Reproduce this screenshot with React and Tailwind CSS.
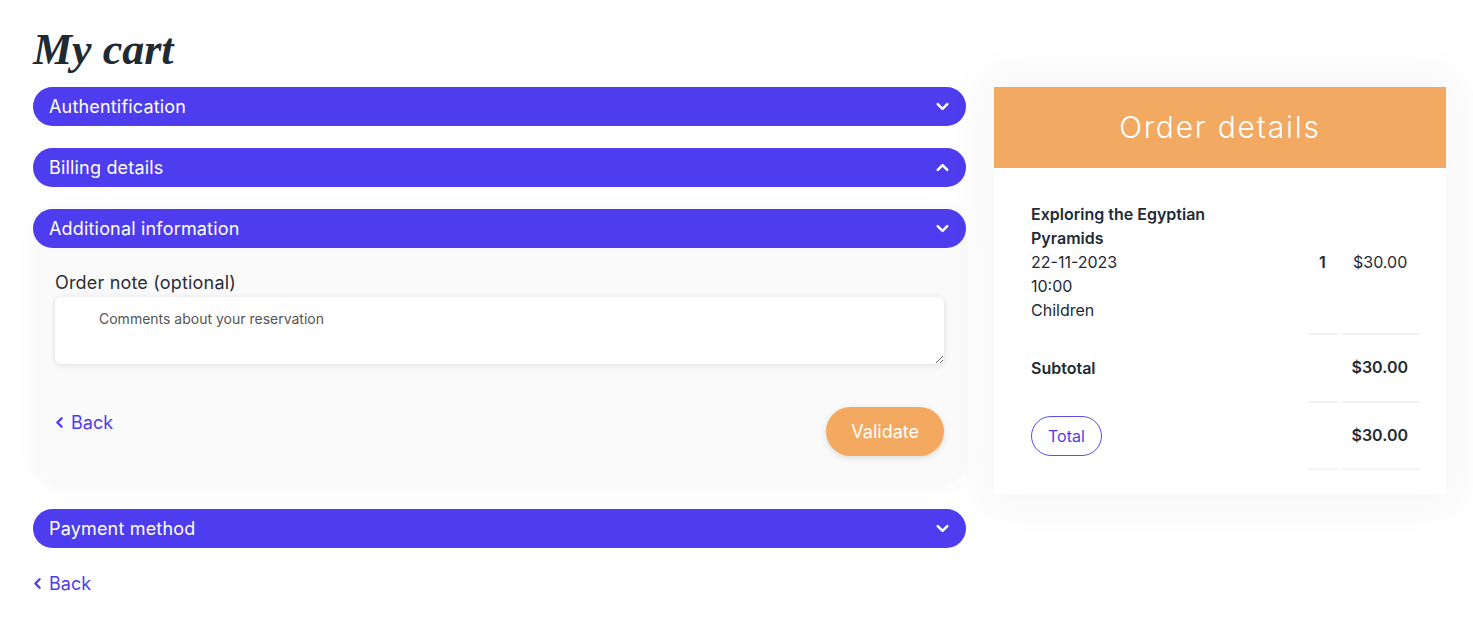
import { ChevronDown, ChevronUp, ChevronLeft } from "lucide-react";

const font = { fontFamily: "Inter, 'Noto Sans', sans-serif" };

function Bar({ title, open }) {
  return (
    <div className="flex h-[39px] items-center justify-between rounded-full bg-[#4d3def] pl-4 pr-[14px] text-white">
      <span className="text-[18px] tracking-[0.01em]">{title}</span>
      {open ? <ChevronUp size={19} strokeWidth={3.2} /> : <ChevronDown size={19} strokeWidth={3.2} />}
    </div>
  );
}

function Back() {
  return (
    <a className="flex items-center gap-[3px] text-[18px] text-[#4d3def]">
      <ChevronLeft size={17} strokeWidth={3.4} className="-ml-[4px]" />
      Back
    </a>
  );
}

export default function App() {
  return (
    <div className="min-h-[640px] bg-white text-[#212b36]" style={font}>
      <div className="flex gap-7 pl-[33px] pt-[28px]">
        <div className="w-[933px]">
          <h1
            className="mb-[15px] text-[44px] font-bold italic leading-[44px] text-[#1f2a33]"
            style={{ fontFamily: "'Liberation Serif', serif" }}
          >
            My cart
          </h1>
          <div className="flex flex-col gap-[22px]">
            <Bar title="Authentification" />
            <Bar title="Billing details" open />
            <div className="rounded-[28px] bg-[#fafafa] shadow-[0_0_24px_rgba(0,0,0,0.03)]">
              <Bar title="Additional information" />
              <div className="px-[22px] pb-[31px] pt-[22px]">
                <label className="block text-[18px] leading-[26px] tracking-[0.01em] text-[#2a2f36]">Order note (optional)</label>
                <textarea
                  placeholder="Comments about your reservation"
                  className="mt-[1px] block h-[67px] w-full rounded-md bg-white px-[44px] pb-[14px] pt-[11px] text-[14px] text-[#555] shadow-[0_1px_6px_rgba(0,0,0,0.12)] outline-none placeholder:text-[#555]"
                />
                <div className="mt-[43px] flex items-start justify-between">
                  <div className="mt-[2px]">
                    <Back />
                  </div>
                  <button className="h-[49px] rounded-full bg-[#f3a960] px-[25px] text-[18px] text-white shadow-[0_2px_6px_rgba(0,0,0,0.12)]">
                    Validate
                  </button>
                </div>
              </div>
            </div>
            <Bar title="Payment method" />
          </div>
          <div className="mt-[22px]">
            <Back />
          </div>
        </div>

        <div className="mt-[59px] w-[452px] self-start bg-white shadow-[0_0_40px_12px_rgba(0,0,0,0.04)]">
          <div className="flex h-[81px] items-center justify-center bg-[#f2a961]">
            <span className="text-[30px] font-light tracking-[0.06em] text-white">Order details</span>
          </div>
          <div className="pb-[24px] pl-[37px] pr-[25px] pt-[34px] text-[16px]">
            <div className="grid grid-cols-[1fr_31px_79px] gap-x-[4px]">
              <div className="pb-[13px] leading-[24px]">
                <div className="font-semibold">Exploring the Egyptian<br />Pyramids</div>
                <div>22-11-2023</div>
                <div>10:00</div>
                <div>Children</div>
              </div>
              <div className="border-b-2 border-[#f1f1f1] pt-[48px] text-center font-semibold">1</div>
              <div className="border-b-2 border-[#f1f1f1] pl-[11px] pt-[48px]">$30.00</div>

              <div className="flex h-[68px] items-center pb-[3px] font-semibold">Subtotal</div>
              <div className="border-b-2 border-[#f1f1f1]" />
              <div className="flex items-center justify-end border-b-2 border-[#f1f1f1] pb-[3px] pr-[13px] font-semibold">$30.00</div>

              <div className="flex h-[67px] items-center pb-[1px]">
                <span className="rounded-full border border-[#5b4cf0] px-[16px] py-[7px] text-[#4d3def]">Total</span>
              </div>
              <div className="border-b-2 border-[#f5f5f5]" />
              <div className="flex items-center justify-end border-b-2 border-[#f5f5f5] pb-[1px] pr-[13px] font-semibold">$30.00</div>
            </div>
          </div>
        </div>
      </div>
    </div>
  );
}
